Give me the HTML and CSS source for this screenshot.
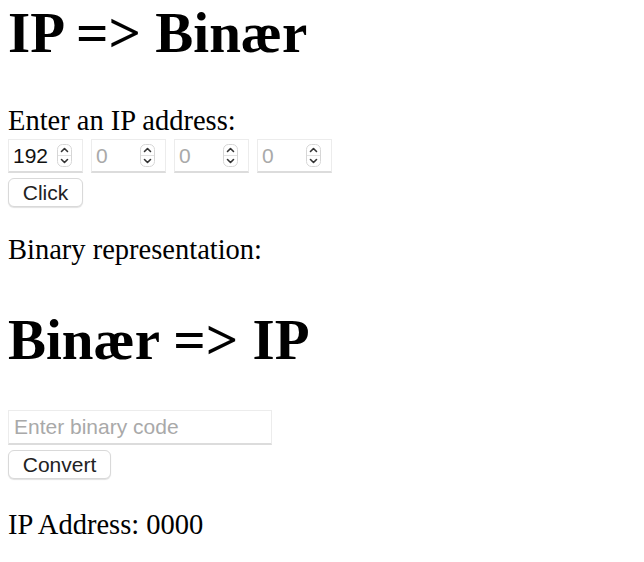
FILE: index.html
```html
<!DOCTYPE html>
<html>
<head>
<meta charset="utf-8">
<link rel="stylesheet" href="styles.css">
</head>
<body>
<h1 class="title title-first">IP =&gt; Binær</h1>
<p class="label">Enter an IP address:</p>
<div class="ip-row">
  <div class="num"><input class="num-input filled" type="text" value="192"><svg class="spin" width="15" height="23" viewBox="0 0 15 23"><rect x="0.5" y="0.5" width="14" height="22" rx="5" fill="#fff" stroke="#d6d6d6"/><line x1="1" y1="11.5" x2="14" y2="11.5" stroke="#e2e2e2"/><path d="M4.5 7.5 L7.5 4.5 L10.5 7.5" fill="none" stroke="#333" stroke-width="1.6" stroke-linecap="round" stroke-linejoin="round"/><path d="M4.5 15.5 L7.5 18.5 L10.5 15.5" fill="none" stroke="#333" stroke-width="1.6" stroke-linecap="round" stroke-linejoin="round"/></svg></div>
  <div class="num"><input class="num-input" type="text" placeholder="0"><svg class="spin" width="15" height="23" viewBox="0 0 15 23"><rect x="0.5" y="0.5" width="14" height="22" rx="5" fill="#fff" stroke="#d6d6d6"/><line x1="1" y1="11.5" x2="14" y2="11.5" stroke="#e2e2e2"/><path d="M4.5 7.5 L7.5 4.5 L10.5 7.5" fill="none" stroke="#333" stroke-width="1.6" stroke-linecap="round" stroke-linejoin="round"/><path d="M4.5 15.5 L7.5 18.5 L10.5 15.5" fill="none" stroke="#333" stroke-width="1.6" stroke-linecap="round" stroke-linejoin="round"/></svg></div>
  <div class="num"><input class="num-input" type="text" placeholder="0"><svg class="spin" width="15" height="23" viewBox="0 0 15 23"><rect x="0.5" y="0.5" width="14" height="22" rx="5" fill="#fff" stroke="#d6d6d6"/><line x1="1" y1="11.5" x2="14" y2="11.5" stroke="#e2e2e2"/><path d="M4.5 7.5 L7.5 4.5 L10.5 7.5" fill="none" stroke="#333" stroke-width="1.6" stroke-linecap="round" stroke-linejoin="round"/><path d="M4.5 15.5 L7.5 18.5 L10.5 15.5" fill="none" stroke="#333" stroke-width="1.6" stroke-linecap="round" stroke-linejoin="round"/></svg></div>
  <div class="num"><input class="num-input" type="text" placeholder="0"><svg class="spin" width="15" height="23" viewBox="0 0 15 23"><rect x="0.5" y="0.5" width="14" height="22" rx="5" fill="#fff" stroke="#d6d6d6"/><line x1="1" y1="11.5" x2="14" y2="11.5" stroke="#e2e2e2"/><path d="M4.5 7.5 L7.5 4.5 L10.5 7.5" fill="none" stroke="#333" stroke-width="1.6" stroke-linecap="round" stroke-linejoin="round"/><path d="M4.5 15.5 L7.5 18.5 L10.5 15.5" fill="none" stroke="#333" stroke-width="1.6" stroke-linecap="round" stroke-linejoin="round"/></svg></div>
</div>
<button class="btn btn-click" type="button">Click</button>
<p class="label label-binary">Binary representation:</p>
<h1 class="title title-second">Binær =&gt; IP</h1>
<input class="text-input" type="text" placeholder="Enter binary code">
<button class="btn btn-convert" type="button">Convert</button>
<p class="label label-result">IP Address: 0000</p>
</body>
</html>
```
FILE: styles.css
```css
html, body {
  background: #fff;
}
body {
  margin: 0;
  padding: 0 8px;
  font-family: "Liberation Serif", "Times New Roman", serif;
  color: #000;
}
.title {
  font-size: 57px;
  font-weight: bold;
  line-height: 62px;
  margin: 0;
}
.title-first {
  padding-top: 2px;
}
.title-second {
  margin-top: 45px;
}
.label {
  font-size: 28.5px;
  line-height: 29px;
  margin: 0;
}
.title-first + .label {
  margin-top: 42px;
}
.ip-row {
  display: flex;
  gap: 8px;
  margin-top: 4px;
}
.num {
  box-sizing: border-box;
  width: 75px;
  height: 34px;
  display: flex;
  align-items: center;
  border: 1px solid #ececec;
  border-bottom: 2px solid #dcdcdc;
  background: #fff;
  padding: 0 10px 0 4px;
}
.num-input {
  flex: 1;
  min-width: 0;
  border: 0;
  outline: none;
  padding: 0;
  margin: 0;
  background: transparent;
  font-family: "Liberation Sans", Arial, sans-serif;
  font-size: 21px;
  color: #111;
}
.num-input::placeholder {
  color: #a9a9a9;
}
.spin {
  flex: none;
  display: block;
}
.btn {
  display: block;
  box-sizing: border-box;
  height: 29px;
  margin-top: 5px;
  padding: 0;
  background: #fff;
  border: 1px solid #d9d9d9;
  border-radius: 6px;
  box-shadow: 0 1px 1px rgba(0,0,0,0.12);
  font-family: "Liberation Sans", Arial, sans-serif;
  font-size: 21px;
  color: #222;
}
.btn-click {
  width: 75px;
}
.btn-convert {
  width: 103px;
}
.label-binary {
  margin-top: 28px;
}
.text-input {
  display: block;
  box-sizing: border-box;
  width: 264px;
  height: 35px;
  margin-top: 39px;
  padding: 0 5px;
  border: 1px solid #ececec;
  border-bottom: 2px solid #dcdcdc;
  outline: none;
  font-family: "Liberation Sans", Arial, sans-serif;
  font-size: 21px;
  color: #111;
}
.text-input::placeholder {
  color: #a9a9a9;
}
.label-result {
  margin-top: 31px;
}
```
